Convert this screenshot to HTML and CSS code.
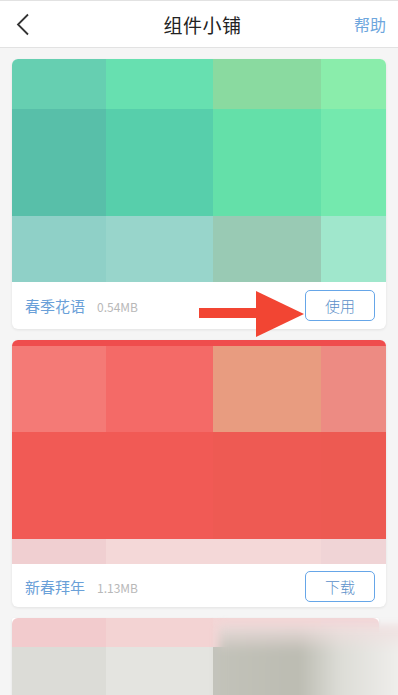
FILE: index.html
```html
<!DOCTYPE html>
<html>
<head>
    <meta charset="UTF-8">
    <title>组件小铺</title>
    <link rel="stylesheet" href="styles.css">
</head>
<body>
    <div class="page">
        <div class="topbar">
            <div class="back">
                <svg width="14" height="23" viewBox="0 0 14 23">
                    <polyline points="12,1.5 2,11.5 12,21.5" fill="none" stroke="#333" stroke-width="1.8"/>
                </svg>
            </div>
            <div class="title">组件小铺</div>
            <div class="help">帮助</div>
        </div>

        <div class="list">
            <div class="card">
                <div class="cover green">
                    <div class="row r1">
                        <span style="background:#66cfb1"></span>
                        <span style="background:#67e0b0"></span>
                        <span style="background:#8adaa0"></span>
                        <span style="background:#8aedab"></span>
                    </div>
                    <div class="row r2">
                        <span style="background:#58bfa9"></span>
                        <span style="background:#57cfab"></span>
                        <span style="background:#64e0a9"></span>
                        <span style="background:#74e9ae"></span>
                    </div>
                    <div class="row r3">
                        <span style="background:#8fd0c7"></span>
                        <span style="background:#98d5cb"></span>
                        <span style="background:#99cab4"></span>
                        <span style="background:#a0e7cc"></span>
                    </div>
                </div>
                <div class="card-foot">
                    <span class="name">春季花语</span>
                    <span class="size">0.54MB</span>
                    <button class="btn">使用</button>
                </div>
                <!-- hint arrow pointing at the button -->
                <svg class="arrow" width="110" height="50" viewBox="0 0 110 50">
                    <rect x="0" y="19" width="60" height="10" fill="#f24533"/>
                    <polygon points="57,2 105,25 57,48" fill="#f24533"/>
                </svg>
            </div>

            <div class="card">
                <div class="cover red">
                    <div class="row r1">
                        <span style="background:#f47a76"></span>
                        <span style="background:#f46a67"></span>
                        <span style="background:#e89c80"></span>
                        <span style="background:#ed8b83"></span>
                    </div>
                    <div class="row r2">
                        <span style="background:#f15a55"></span>
                        <span style="background:#f15a55"></span>
                        <span style="background:#ee5a53"></span>
                        <span style="background:#ed5a52"></span>
                    </div>
                    <div class="row r3">
                        <span style="background:#f0cfd1"></span>
                        <span style="background:#f4d8d8"></span>
                        <span style="background:#f4d8d8"></span>
                        <span style="background:#f0d4d6"></span>
                    </div>
                </div>
                <div class="card-foot">
                    <span class="name">新春拜年</span>
                    <span class="size">1.13MB</span>
                    <button class="btn">下载</button>
                </div>
            </div>

            <div class="card narrow">
                <div class="cover grey">
                    <div class="row r1">
                        <span style="background:#f2cbcd"></span>
                        <span style="background:#f3d3d3"></span>
                        <span style="background:#f3d6d6"></span>
                        <span style="background:#f2d6d8"></span>
                    </div>
                    <div class="row r2">
                        <span style="background:#dcdcd7"></span>
                        <span style="background:#e4e4e0"></span>
                        <span style="background:#c4c4bc"></span>
                        <span style="background:#e0e0dc"></span>
                    </div>
                </div>
            </div>
        </div>

        <div class="smudge"></div>
    </div>
</body>
</html>
```

FILE: styles.css
```css
* {
    margin: 0;
    padding: 0;
    box-sizing: border-box;
}

body {
    font-family: "Noto Sans CJK SC", "Noto Sans", sans-serif;
    background: #f5f5f5;
    width: 398px;
    height: 695px;
    overflow: hidden;
}

.page {
    position: relative;
    height: 695px;
    overflow: hidden;
}

.topbar {
    height: 48px;
    background: #fff;
    border-top: 1px solid #e2e2e2;
    border-bottom: 1px solid #e2e2e2;
    display: flex;
    align-items: center;
    padding: 0 12px 0 16px;
}

.back {
    width: 60px;
    display: flex;
    align-items: center;
    height: 23px;
}

.title {
    flex: 1;
    text-align: center;
    font-size: 19px;
    color: #222;
    letter-spacing: 0.5px;
    margin-left: 3px;
}

.help {
    width: 60px;
    text-align: right;
    font-size: 16px;
    color: #6ea6dd;
}

.list {
    padding: 11px 12px 0 12px;
    display: flex;
    flex-direction: column;
    gap: 11px;
}

.card {
    position: relative;
    background: #fff;
    border-radius: 6px;
    box-shadow: 0 1px 3px rgba(0, 0, 0, 0.08);
}

.card.narrow {
    margin-right: 7px;
    border-radius: 2px;
}

.cover {
    border-radius: 6px 6px 0 0;
    overflow: hidden;
}

.row {
    display: grid;
    grid-template-columns: 94px 107px 108px 1fr;
}

.row span {
    display: block;
}

.green .r1 { height: 50px; }
.green .r2 { height: 107px; }
.green .r3 { height: 66px; }

.red {
    border-top: 6px solid #ef4d4d;
}

.red .r1 { height: 86px; }
.red .r2 { height: 107px; }
.red .r3 { height: 25px; }

.grey .r1 { height: 29px; }
.grey .r2 { height: 60px; }

.card-foot {
    height: 47px;
    display: flex;
    align-items: center;
    padding: 0 11px 0 13px;
}

.card + .card .card-foot {
    height: 43px;
    padding-top: 2px;
}

.name {
    font-size: 15px;
    color: #6aa0d8;
}

.size {
    font-size: 12px;
    color: #b8b8b8;
    margin-left: 12px;
    margin-top: 1px;
}

.btn {
    margin-left: auto;
    width: 70px;
    height: 31px;
    border: 1px solid #66a6e8;
    border-radius: 5px;
    background: #fff;
    color: #5a8fc9;
    font-family: inherit;
    font-size: 15px;
    font-weight: 300;
}

.arrow {
    position: absolute;
    left: 187px;
    top: 230px;
}

/* blurred watermark in the lower corner */
.smudge {
    position: absolute;
    left: 219px;
    top: 625px;
    width: 200px;
    height: 90px;
    background:
        linear-gradient(180deg, rgba(240, 222, 222, 0.9) 0%, rgba(240, 222, 222, 0) 30%),
        linear-gradient(90deg, #c2c2b9 0%, #bcbcb2 40%, #dcdcd6 60%, #ecebe8 85%, #f5f4f2 100%);
    filter: blur(4px);
}
```
